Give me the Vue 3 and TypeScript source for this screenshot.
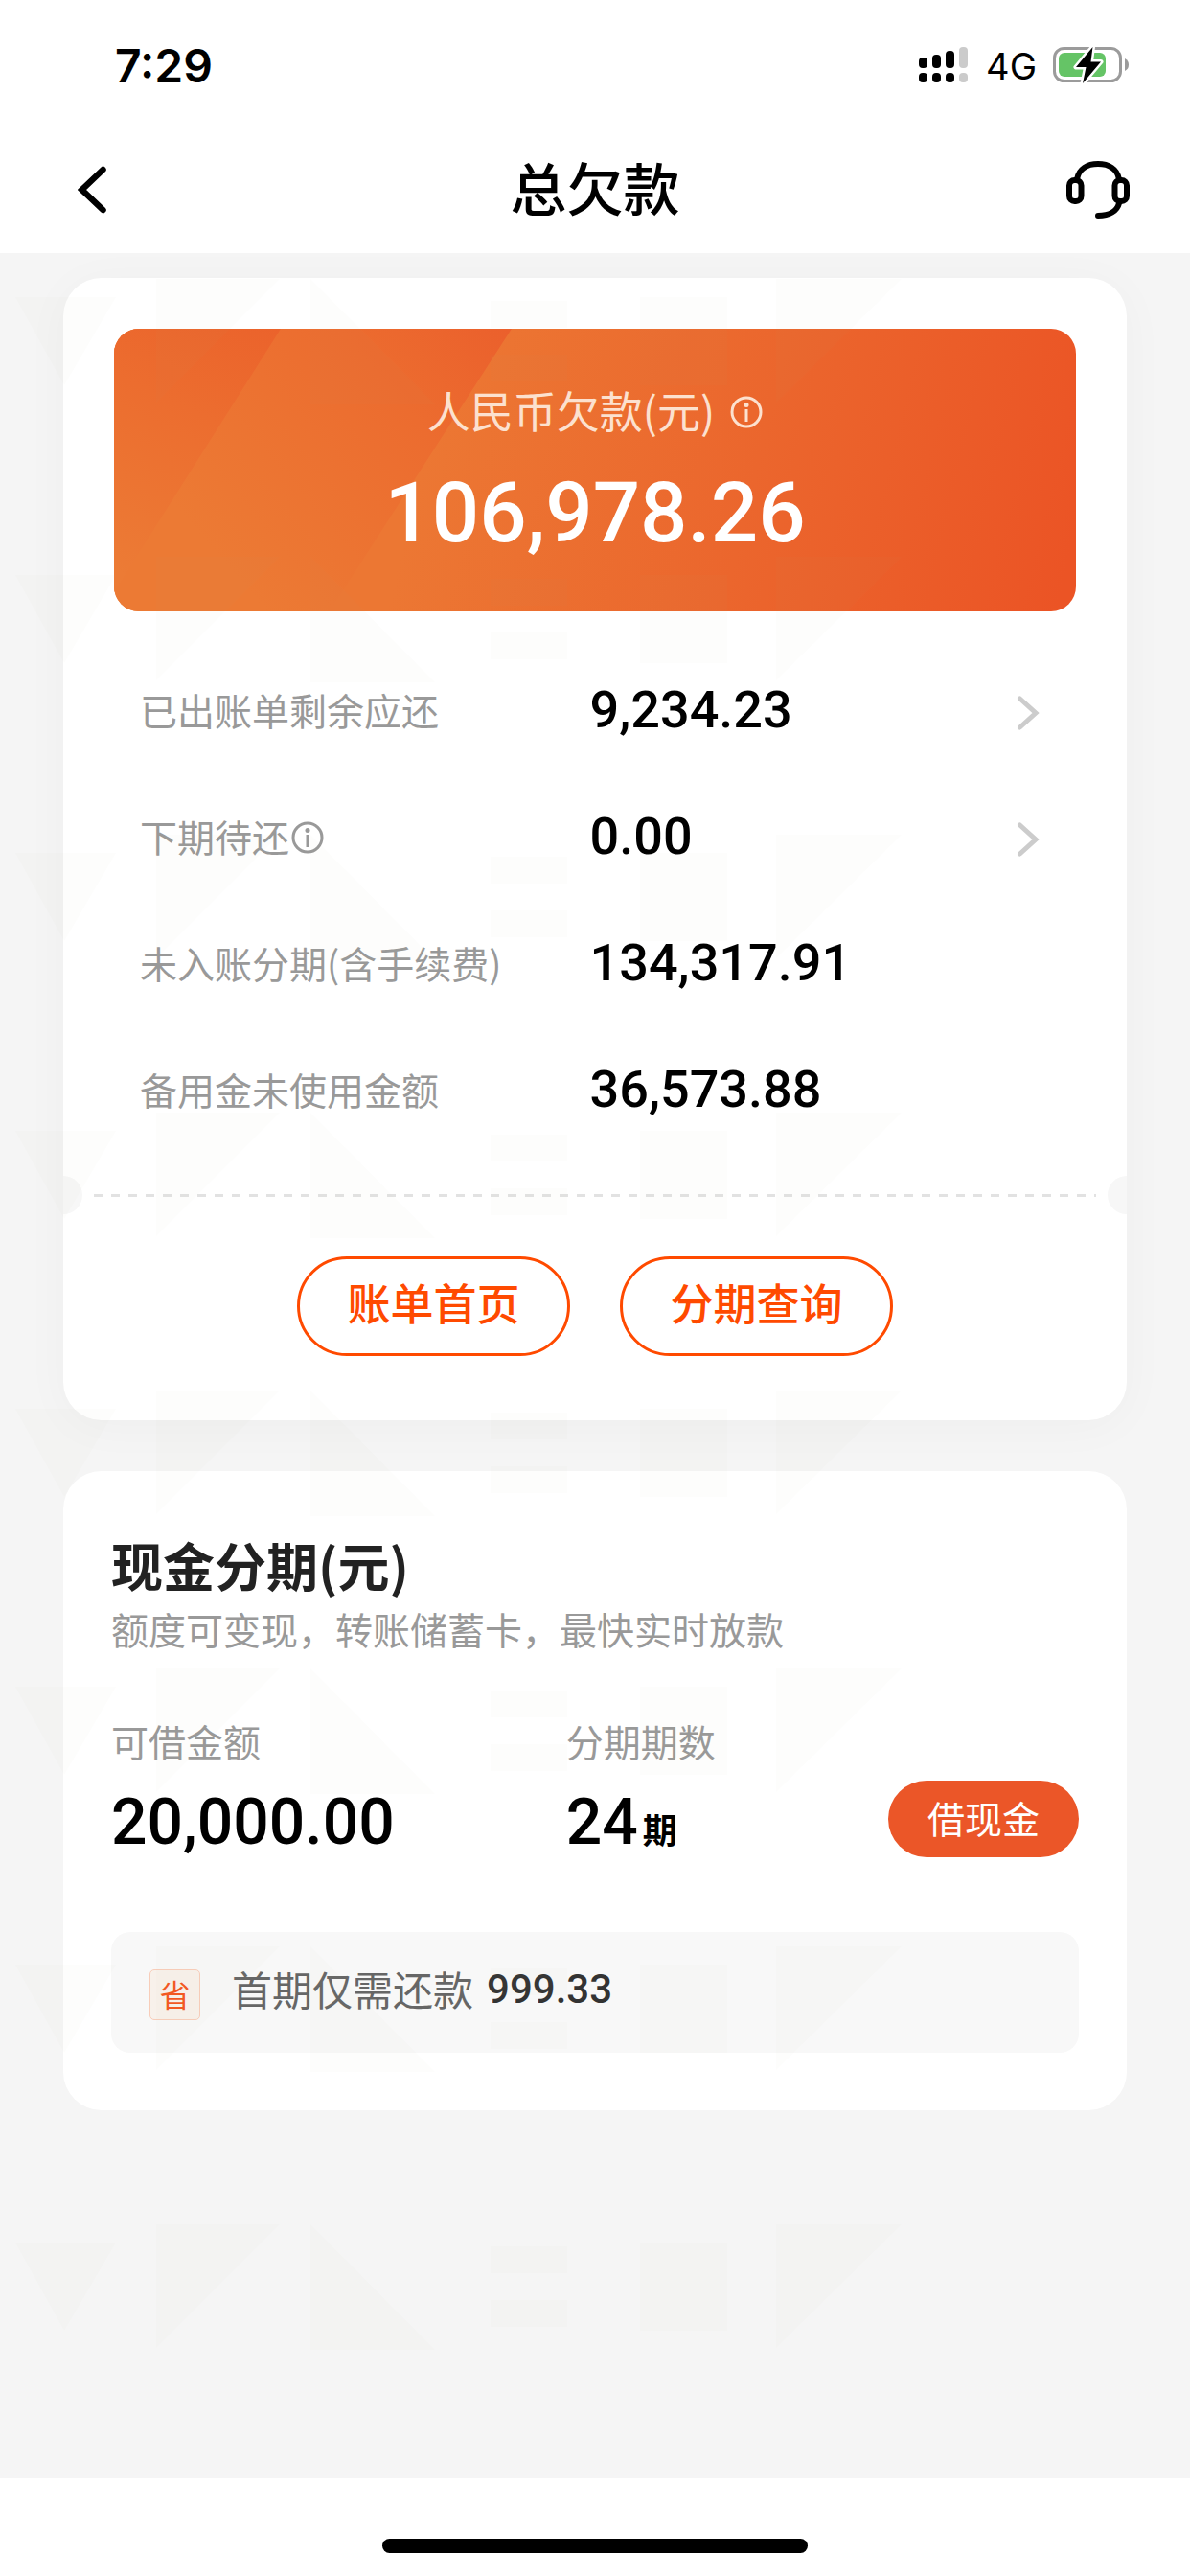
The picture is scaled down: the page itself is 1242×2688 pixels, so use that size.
<script setup lang="ts">
interface DebtRow {
  label: string
  amount: string
  info?: boolean
  link?: boolean
}

const rows: DebtRow[] = [
  { label: '已出账单剩余应还', amount: '9,234.23', link: true },
  { label: '下期待还', amount: '0.00', info: true, link: true },
  { label: '未入账分期(含手续费)', amount: '134,317.91' },
  { label: '备用金未使用金额', amount: '36,573.88' },
]
</script>

<template>
  <div class="page">
    <header class="top">
      <div class="status">
        <span class="time">7:29</span>
        <div class="status-right">
          <svg class="signal" viewBox="0 0 52 38" aria-hidden="true">
            <rect x="0" y="11" width="9" height="11" rx="4" />
            <rect x="14" y="8" width="9" height="14" rx="4" />
            <rect x="28" y="4" width="9" height="18" rx="4" />
            <rect class="off" x="42" y="0" width="9" height="22" rx="4" />
            <rect x="0" y="27" width="9" height="10" rx="4" />
            <rect x="14" y="27" width="9" height="10" rx="4" />
            <rect x="28" y="27" width="9" height="10" rx="4" />
            <rect class="off" x="42" y="27" width="9" height="10" rx="4" />
          </svg>
          <span class="network">4G</span>
          <svg class="battery" viewBox="0 0 80 40" aria-hidden="true">
            <rect x="1.5" y="2.5" width="69" height="34" rx="10" fill="none" stroke="#9b9b9b" stroke-width="3" />
            <path d="M75 13q4 2 4 6.500t-4 6.500z" fill="#9b9b9b" />
            <rect x="6" y="7" width="49" height="25" rx="6" fill="#65c466" />
            <path d="M41.500 1 24 22h10.500L31 39 50 16.500H39.500z" fill="#000" stroke="#fff" stroke-width="5" paint-order="stroke" stroke-linejoin="round" />
          </svg>
        </div>
      </div>
      <nav class="nav">
        <button class="icon-button" type="button" aria-label="返回">
          <svg width="30" height="50" viewBox="0 0 30 50"><path d="M26.500 4 4.500 25l22 21" fill="none" stroke="#000" stroke-width="6.500" stroke-linecap="round" /></svg>
        </button>
        <h1 class="title">总欠款</h1>
        <button class="icon-button service" type="button" aria-label="客服">
          <svg width="66" height="62" viewBox="0 0 66 62" fill="none" stroke="#000" stroke-width="6" stroke-linecap="round">
            <path d="M11 20C13 9 22 4 33 4s20 5 22 16" />
            <rect x="3" y="21" width="12.500" height="22" rx="5.500" />
            <rect x="50.500" y="21" width="12.500" height="22" rx="5.500" />
            <path d="M55 45c-2 8-10 13-22 13" />
          </svg>
        </button>
      </nav>
    </header>

    <main class="content">
      <section class="card debt">
        <div class="banner">
          <svg class="stripes" viewBox="0 0 1004 295" preserveAspectRatio="none" aria-hidden="true">
            <defs>
              <linearGradient id="stripeA" gradientUnits="userSpaceOnUse" x1="190" y1="0" x2="60" y2="280">
                <stop offset="0" stop-color="#eb622b" /><stop offset="0.4" stop-color="#ec6d2f" /><stop offset="1" stop-color="#ec7b35" />
              </linearGradient>
              <linearGradient id="stripeB" gradientUnits="userSpaceOnUse" x1="410" y1="0" x2="120" y2="250">
                <stop offset="0" stop-color="#eb602c" /><stop offset="0.35" stop-color="#ec6c2f" /><stop offset="1" stop-color="#ec7a34" />
              </linearGradient>
              <linearGradient id="stripeC" gradientUnits="userSpaceOnUse" x1="330" y1="110" x2="990" y2="270">
                <stop offset="0" stop-color="#ec7733" /><stop offset="0.5" stop-color="#eb662d" /><stop offset="1" stop-color="#eb5425" />
              </linearGradient>
            </defs>
            <rect width="1004" height="295" fill="url(#stripeC)" />
            <path d="M0 0h415L225 295H0z" fill="url(#stripeB)" />
            <path d="M0 0h174L0 275z" fill="url(#stripeA)" />
          </svg>
          <div class="banner-label">
            <span>人民币欠款(元)</span>
            <svg width="34" height="34" viewBox="0 0 34 34" aria-hidden="true">
              <circle cx="17" cy="17" r="15" fill="none" stroke="currentColor" stroke-width="3" />
              <circle cx="17" cy="9.500" r="2.500" fill="currentColor" />
              <path d="M17 14v13" stroke="currentColor" stroke-width="3" />
            </svg>
          </div>
          <div class="banner-amount">106,978.26</div>
        </div>

        <div class="rows">
          <component :is="row.link ? 'a' : 'div'" v-for="row in rows" :key="row.label" class="row" :href="row.link ? '#' : undefined">
            <span class="row-label">
              {{ row.label }}
              <svg v-if="row.info" width="34" height="34" viewBox="0 0 34 34" aria-hidden="true">
                <circle cx="17" cy="17" r="15" fill="none" stroke="currentColor" stroke-width="3" />
                <circle cx="17" cy="9.500" r="2.500" fill="currentColor" />
                <path d="M17 14v13" stroke="currentColor" stroke-width="3" />
              </svg>
            </span>
            <span class="row-value">
              {{ row.amount }}
              <svg v-if="row.link" width="24" height="38" viewBox="0 0 24 38" aria-hidden="true">
                <path d="M3.500 4 20 19 3.500 34" fill="none" stroke="#ccc" stroke-width="5" stroke-linecap="round" />
              </svg>
            </span>
          </component>
        </div>

        <div class="tear"><i class="notch left"></i><i class="dashes"></i><i class="notch right"></i></div>

        <div class="actions">
          <button class="outline" type="button">账单首页</button>
          <button class="outline" type="button">分期查询</button>
        </div>
      </section>

      <section class="card cash">
        <h2 class="cash-title">现金分期(元)</h2>
        <p class="cash-note">额度可变现，转账储蓄卡，最快实时放款</p>
        <div class="cash-row">
          <div class="cash-item amount">
            <span class="cash-label">可借金额</span>
            <span class="cash-number">20,000.00</span>
          </div>
          <div class="cash-item">
            <span class="cash-label">分期期数</span>
            <span class="cash-number">24<small>期</small></span>
          </div>
          <button class="borrow" type="button">借现金</button>
        </div>
        <div class="saving">
          <span class="badge">省</span>
          <span class="saving-text">首期仅需还款</span>
          <strong class="saving-amount">999.33</strong>
        </div>
      </section>

      <svg class="watermark" aria-hidden="true">
        <defs>
          <pattern id="mark" patternUnits="userSpaceOnUse" width="1242" height="290">
            <path d="M16 46h105L67 138zM163 27h129L163 156zM324 27v131h130zM512 50h80v28h-80zM512 106h80v28h-80zM668 46h91v92h-91zM810 27h131L810 156z" />
          </pattern>
        </defs>
        <rect width="100%" height="100%" fill="url(#mark)" />
      </svg>
    </main>

    <footer class="home"><span class="home-bar"></span></footer>
  </div>
</template>

<style>
body {
  margin: 0;
  background: #fff;
}
</style>

<style scoped>
.page {
  display: flex;
  flex-direction: column;
  min-height: 100vh;
  font-family: "Noto Sans CJK SC", "Noto Sans", sans-serif;
  color: #000;
}

button {
  padding: 0;
  border: 0;
  background: none;
  font-family: inherit;
  color: inherit;
}

svg {
  display: block;
  flex: none;
}

.status {
  display: flex;
  align-items: center;
  justify-content: space-between;
  height: 132px;
  padding: 4px 63px 0 120px;
  box-sizing: border-box;
  font-family: Inter, "Liberation Sans", sans-serif;
}

.time {
  font-size: 48px;
  font-weight: 600;
}

.status-right {
  display: flex;
  align-items: center;
}

.signal {
  width: 52px;
  height: 38px;
}

.signal .off {
  fill: #cbcbcb;
}

.network {
  margin: 2px 17px 0 18px;
  font-size: 38px;
}

.battery {
  width: 80px;
  height: 40px;
}

.nav {
  display: flex;
  align-items: center;
  justify-content: space-between;
  height: 132px;
  padding: 0 63px 0 81px;
}

.icon-button {
  display: flex;
  width: 66px;
}

.service {
  justify-content: flex-end;
}

.title {
  margin: 0 0 6px -18px;
  font-size: 59px;
  font-weight: 500;
  line-height: 88px;
}

.content {
  position: relative;
  flex: 1;
  padding: 26px 66px;
  background: #f5f5f5;
}

.watermark {
  position: absolute;
  top: 0;
  left: 0;
  width: 100%;
  height: 100%;
  fill: rgba(150, 150, 110, 0.022);
  pointer-events: none;
}

.card {
  border-radius: 40px;
  background: #fff;
}

.debt {
  padding: 53px 0 67px;
  box-shadow: 0 6px 50px rgba(0, 0, 0, 0.03);
}

.banner {
  position: relative;
  display: flex;
  flex-direction: column;
  align-items: center;
  height: 295px;
  margin: 0 53px;
  overflow: hidden;
  border-radius: 26px;
}

.stripes {
  position: absolute;
  top: 0;
  left: 0;
  width: 100%;
  height: 100%;
}

.banner-label {
  position: relative;
  display: flex;
  align-items: center;
  gap: 16px;
  margin-top: 52px;
  font-size: 45px;
  line-height: 66px;
  color: #fce1cf;
}

.banner-label svg {
  margin-top: 4px;
}

.banner-amount {
  position: relative;
  margin-top: 22px;
  font-family: Roboto, sans-serif;
  font-size: 87px;
  font-weight: 500;
  line-height: 104px;
  color: #fff;
}

.rows {
  padding: 36px 91px 0 80px;
}

.row {
  display: grid;
  grid-template-columns: 1fr 1fr;
  height: 132px;
  color: inherit;
  text-decoration: none;
}

.row-label {
  display: flex;
  align-items: center;
  gap: 2px;
  font-size: 39px;
  color: #999;
}

.row-label svg {
  margin-top: 4px;
}

.row-value {
  display: flex;
  align-items: center;
  justify-content: space-between;
  font-family: Roboto, sans-serif;
  font-size: 54px;
  font-weight: 500;
}

.row-value svg {
  margin-top: 8px;
}

.tear {
  display: flex;
  align-items: center;
  gap: 12px;
  margin-top: 25px;
}

.notch {
  width: 20px;
  height: 40px;
  background: #f7f7f7;
}

.notch.left {
  border-radius: 0 20px 20px 0;
}

.notch.right {
  border-radius: 20px 0 0 20px;
}

.dashes {
  flex: 1;
  height: 3px;
  background: repeating-linear-gradient(90deg, #e2e2e2 0 9px, transparent 9px 18px);
}

.actions {
  display: flex;
  justify-content: center;
  gap: 52px;
  margin-top: 44px;
}

.outline {
  width: 285px;
  height: 104px;
  padding-bottom: 10px;
  border: 3px solid #ff4a00;
  border-radius: 52px;
  font-size: 45px;
  font-weight: 500;
  color: #ff4a00;
}

.cash {
  margin-top: 53px;
  padding: 58px 50px 60px;
}

.cash-title {
  margin: 0;
  font-size: 54px;
  font-weight: 700;
  line-height: 80px;
  color: #222;
}

.cash-note {
  margin: 0;
  font-size: 39px;
  line-height: 52px;
  color: #999;
}

.cash-row {
  display: flex;
  align-items: flex-end;
  margin-top: 61px;
}

.cash-item {
  display: flex;
  flex: 1;
  flex-direction: column;
  gap: 6px;
}

.cash-item.amount {
  flex: 0 0 47%;
}

.cash-label {
  font-size: 39px;
  line-height: 60px;
  color: #999;
}

.cash-number {
  font-family: Roboto, sans-serif;
  font-size: 66px;
  font-weight: 500;
  line-height: 100px;
}

.cash-number small {
  margin-left: 5px;
  font-family: "Noto Sans CJK SC", sans-serif;
  font-size: 36px;
  font-weight: 700;
  line-height: 36px;
}

.borrow {
  width: 199px;
  height: 80px;
  margin-bottom: 14px;
  padding-bottom: 4px;
  border-radius: 40px;
  background: #eb5628;
  font-size: 39px;
  color: #fff;
}

.saving {
  display: flex;
  align-items: center;
  box-sizing: border-box;
  height: 126px;
  margin-top: 64px;
  padding: 0 40px 8px;
  border-radius: 20px;
  background: #f8f8f8;
}

.badge {
  width: 51px;
  height: 51px;
  margin-top: 13px;
  border: 1px solid #f8cdb9;
  border-radius: 5px;
  background: #f8f1eb;
  font-size: 32px;
  line-height: 48px;
  text-align: center;
  color: #f4571f;
}

.saving-text {
  margin-left: 33px;
  font-size: 42px;
  line-height: 60px;
  color: #666;
}

.saving-amount {
  margin-left: 14px;
  font-family: Roboto, sans-serif;
  font-size: 42px;
  font-weight: 500;
  color: #333;
}

.home {
  display: flex;
  align-items: flex-end;
  justify-content: center;
  height: 102px;
}

.home-bar {
  width: 444px;
  height: 15px;
  margin-bottom: 24px;
  border-radius: 8px;
  background: #000;
}
</style>
